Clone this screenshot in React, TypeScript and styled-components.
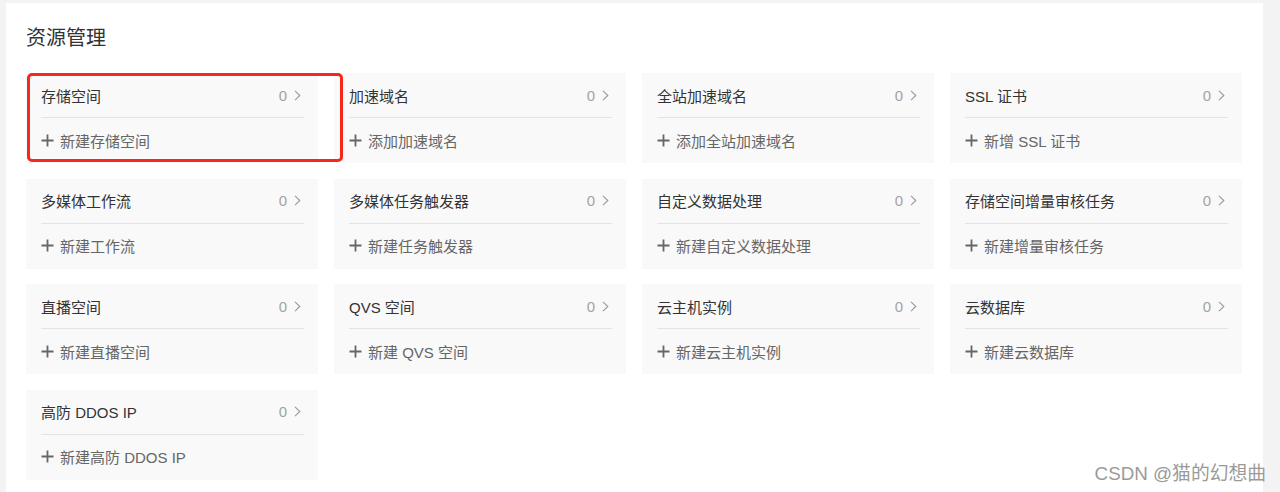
import React from 'react'
import styled, { createGlobalStyle } from 'styled-components'

const GlobalStyle = createGlobalStyle`
  html, body {
    margin: 0;
    padding: 0;
    background: #f3f3f3;
    font-family: "Liberation Sans", "Noto Sans CJK SC", sans-serif;
  }
`

const Page = styled.div`
  position: relative;
  width: 1280px;
  height: 492px;
  box-sizing: border-box;
  padding: 3px 17px 0 6px;
  overflow: hidden;
`

const Panel = styled.div`
  background: #fff;
  height: 100%;
  box-sizing: border-box;
  padding: 22px 20px 0 20px;
`

const Title = styled.h2`
  margin: 0 0 22px 0;
  font-size: 20px;
  font-weight: 400;
  color: #333;
  line-height: 26px;
`

const Grid = styled.div`
  position: relative;
  display: grid;
  grid-template-columns: repeat(4, 292px);
  column-gap: 16px;
  row-gap: 15.5px;
`

const Card = styled.div`
  background: #f9f9f9;
  height: 90px;
  padding: 0 14px 0 15px;
  box-sizing: border-box;
`

const CardHead = styled.div`
  display: flex;
  align-items: center;
  justify-content: space-between;
  height: 44px;
  border-bottom: 1px solid #e3e3e3;
  font-size: 15px;
  color: #333;
`

const Count = styled.span`
  display: flex;
  align-items: center;
  gap: 7px;
  color: #a3a3a3;
  font-size: 15px;
  padding-right: 3px;
`

const Action = styled.div`
  display: flex;
  align-items: center;
  gap: 6px;
  height: 44px;
  font-size: 15px;
  color: #666;
`

const Highlight = styled.div`
  position: absolute;
  left: 1px;
  top: 0;
  width: 316px;
  height: 89px;
  box-sizing: border-box;
  border: 3px solid #f5281e;
  border-radius: 5px;
  pointer-events: none;
`

const Watermark = styled.div`
  position: absolute;
  right: 14px;
  bottom: 7px;
  font-size: 18.8px;
  color: #9a9a9a;
`

const Chevron = () => (
  <svg width="7" height="11" viewBox="0 0 7 11" fill="none">
    <path d="M1 0.8 L5.8 5.5 L1 10.2" stroke="#9a9a9a" strokeWidth="1.1" />
  </svg>
)

const Plus = () => (
  <svg width="13" height="13" viewBox="0 0 13 13">
    <path d="M6.5 0.5 V12.5 M0.5 6.5 H12.5" stroke="#666" strokeWidth="1.8" />
  </svg>
)

const items: [string, string][] = [
  ['存储空间', '新建存储空间'],
  ['加速域名', '添加加速域名'],
  ['全站加速域名', '添加全站加速域名'],
  ['SSL 证书', '新增 SSL 证书'],
  ['多媒体工作流', '新建工作流'],
  ['多媒体任务触发器', '新建任务触发器'],
  ['自定义数据处理', '新建自定义数据处理'],
  ['存储空间增量审核任务', '新建增量审核任务'],
  ['直播空间', '新建直播空间'],
  ['QVS 空间', '新建 QVS 空间'],
  ['云主机实例', '新建云主机实例'],
  ['云数据库', '新建云数据库'],
  ['高防 DDOS IP', '新建高防 DDOS IP'],
]

export default function App() {
  return (
    <>
      <GlobalStyle />
      <Page>
        <Panel>
          <Title>资源管理</Title>
          <Grid>
            {items.map(([name, action]) => (
              <Card key={name}>
                <CardHead>
                  <span>{name}</span>
                  <Count>
                    0 <Chevron />
                  </Count>
                </CardHead>
                <Action>
                  <Plus />
                  {action}
                </Action>
              </Card>
            ))}
            <Highlight />
          </Grid>
        </Panel>
        <Watermark>CSDN @猫的幻想曲</Watermark>
      </Page>
    </>
  )
}
